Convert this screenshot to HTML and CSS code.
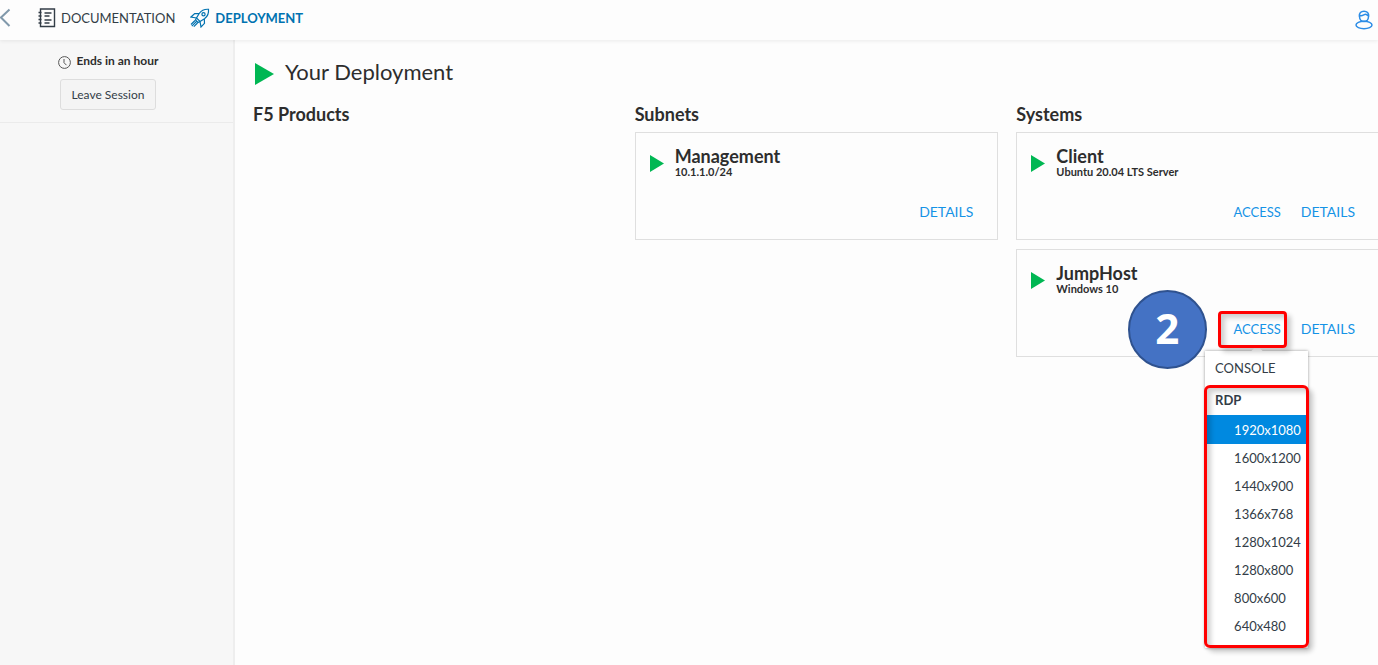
FILE: index.html
```html
<!DOCTYPE html>
<html lang="en">
<head>
<meta charset="utf-8">
<title>Your Deployment</title>
<link rel="stylesheet" href="styles.css">
</head>
<body>
<header class="topbar">
  <button class="back" type="button" aria-label="Back"><svg width="11" height="20" viewBox="0 0 11 20"><path d="M9.500 1.500 1 9.500l8.500 8.500"/></svg></button>
  <nav class="tabs">
    <a class="tab" href="#documentation">
      <svg class="icon-doc" width="18" height="20" viewBox="0 0 18 20"><path d="M2.500 1h14v17.500h-14z"/><path d="M.5 4.500h3M.5 8h3M.5 11.500h3M.5 15h3M6.500 5h7M6.500 8h5M6.500 12h7M6.500 15h5"/></svg>
      <span>DOCUMENTATION</span>
    </a>
    <a class="tab active" href="#deployment">
      <svg class="icon-rocket" width="20" height="20" viewBox="0 0 20 20"><path d="M18.500 1.300c-4-.3-7 1-9.300 4.200L6.500 10l3.500 3.500 4.500-2.700c3.200-2.300 4.400-5.500 4-9.500z"/><circle cx="13.500" cy="6.300" r="1.600"/><path d="M9 5.700 4.700 5.500 1 9l5.500 1M14.300 11l.2 4.300L11 19l-1-5.500M6.500 10l-1 2 2.500 2.500 2-1M5 12.500l-4 4M6.300 13.700 1.800 18.200M7.500 15l-3.700 3.700"/></svg>
      <span>DEPLOYMENT</span>
    </a>
  </nav>
  <button class="user" type="button" aria-label="Account"><svg width="18" height="20" viewBox="0 0 18 20"><path d="M4.300 6.500C4 3 6 1.200 9 1.200s5 1.800 4.700 5.300M5 5.500c2.500.8 4-1.200 5.500-1.200 1.300 0 1.500 1.200 3 1.400M4.500 6.500c0 3 2 5 4.500 5s4.500-2 4.500-5"/><ellipse cx="9" cy="15" rx="8" ry="3.700"/></svg></button>
</header>
<div class="shell">
  <aside class="sidebar">
    <section class="session">
      <p class="timer"><svg width="13" height="13" viewBox="0 0 13 13"><circle cx="6.500" cy="6.500" r="5.900"/><path d="M6 3v3.700l2.500 2.500"/></svg><span>Ends in an hour</span></p>
      <button class="leave" type="button">Leave Session</button>
    </section>
  </aside>
  <main class="main">
    <h1 class="title"><svg class="play" width="19" height="22" viewBox="0 0 19 22"><path d="M0 0 19 11 0 22z"/></svg>Your Deployment</h1>
    <div class="columns">
      <section class="column"><h2 class="heading">F5 Products</h2></section>
      <section class="column">
        <h2 class="heading">Subnets</h2>
        <article class="card">
          <div class="card-head">
            <svg class="play" width="14" height="17" viewBox="0 0 14 17"><path d="M0 0 14 8.500 0 17z"/></svg>
            <div><h3 class="name">Management</h3><p class="detail">10.1.1.0/24</p></div>
          </div>
          <div class="actions"><a class="action more" href="#management">DETAILS</a></div>
        </article>
      </section>
      <section class="column">
        <h2 class="heading">Systems</h2>
        <article class="card">
          <div class="card-head">
            <svg class="play" width="14" height="17" viewBox="0 0 14 17"><path d="M0 0 14 8.500 0 17z"/></svg>
            <div><h3 class="name">Client</h3><p class="detail">Ubuntu 20.04 LTS Server</p></div>
          </div>
          <div class="actions"><button class="action" type="button">ACCESS</button><a class="action more" href="#client">DETAILS</a></div>
        </article>
        <article class="card">
          <div class="card-head">
            <svg class="play" width="14" height="17" viewBox="0 0 14 17"><path d="M0 0 14 8.500 0 17z"/></svg>
            <div><h3 class="name">JumpHost</h3><p class="detail">Windows 10</p></div>
          </div>
          <div class="actions">
            <div class="dropdown">
              <button class="action" type="button" aria-expanded="true">ACCESS</button>
              <div class="menu">
                <button class="item console" type="button">CONSOLE</button>
                <div class="group">
                  <p class="group-title">RDP</p>
                  <button class="item size selected" type="button">1920x1080</button>
                  <button class="item size" type="button">1600x1200</button>
                  <button class="item size" type="button">1440x900</button>
                  <button class="item size" type="button">1366x768</button>
                  <button class="item size" type="button">1280x1024</button>
                  <button class="item size" type="button">1280x800</button>
                  <button class="item size" type="button">800x600</button>
                  <button class="item size" type="button">640x480</button>
                  <span class="outline group-outline"></span>
                </div>
              </div>
              <span class="outline access-outline"></span>
              <span class="step">2</span>
            </div>
            <a class="action more" href="#jumphost">DETAILS</a>
          </div>
        </article>
      </section>
    </div>
  </main>
</div>
</body>
</html>
```
FILE: styles.css
```css
* { box-sizing: border-box; }
body {
  margin: 0;
  min-height: 100vh;
  display: flex;
  flex-direction: column;
  background: #fdfdfd;
  color: #2d2d2d;
  font: 13px/18px Lato, "Open Sans", sans-serif;
}
h1, h2, h3, p { margin: 0; }
button { font: inherit; color: inherit; padding: 0; border: 0; background: none; }
a { color: inherit; text-decoration: none; }
svg { display: block; flex: none; fill: none; stroke: currentColor; }

.topbar {
  display: flex;
  align-items: center;
  height: 40px;
  padding: 0 5px 5px 0;
  background: #fdfdfd;
  box-shadow: 0 1px 4px rgba(0, 0, 0, .08);
  z-index: 1;
}
.back { color: #8199ab; stroke-width: 2; }
.tabs { display: flex; gap: 15px; margin-left: 27px; flex: 1; }
.tab { display: flex; align-items: center; gap: 5px; color: #333d47; }
.tab.active { color: #0072b0; font-weight: 700; }
.icon-doc { stroke-width: 1.400; }
.icon-rocket { stroke-width: 1.200; }
.user { color: #2b8ce6; stroke-width: 1.500; padding-top: 4px; }

.shell { display: flex; flex: 1; }
.sidebar { width: 235px; flex: none; background: #f7f7f7; border-right: 2px solid #eee; }
.session {
  display: flex;
  flex-direction: column;
  align-items: center;
  gap: 9px;
  padding: 12px 17px 12px 0;
  border-bottom: 1px solid #ebebeb;
}
.timer { display: flex; align-items: center; gap: 6px; font-size: 12px; font-weight: 700; }
.timer svg { margin-top: 3px; color: #555; }
.leave {
  height: 31px;
  padding: 0 11px;
  border: 1px solid #ddd;
  border-radius: 3px;
  background: #f4f4f4;
  color: #333d47;
  font-size: 12px;
}

.main { flex: 1; min-width: 0; overflow: hidden; padding: 17px 0 0 18px; }
.play { fill: #00b753; stroke: none; }
.title { display: flex; align-items: center; gap: 11px; padding-left: 2px; font-size: 22px; line-height: 30px; font-weight: 400; }
.title .play { margin-top: 3px; }
.columns {
  display: grid;
  grid-template-columns: repeat(3, 1fr);
  gap: 18px;
  margin: 15px -2px 0 0;
}
.heading { font-size: 18px; line-height: 24px; padding-bottom: 6px; }
.card {
  display: flex;
  flex-direction: column;
  justify-content: space-between;
  height: 108px;
  margin-bottom: 9px;
  padding: 13px 24px 18px 14px;
  border: 1px solid #dfdfdf;
}
.card-head { display: flex; gap: 11px; }
.card-head .play { margin-top: 9px; }
.name { font-size: 18px; line-height: 20px; }
.detail { font-size: 11px; line-height: 12px; font-weight: 700; }
.actions { display: flex; justify-content: flex-end; gap: 20px; }
.action { display: block; color: #1593e6; line-height: 18px; }
.more { font-size: 14px; }

.dropdown { position: relative; }
.menu {
  position: absolute;
  top: 31px;
  left: 50%;
  width: 103px;
  margin-left: -52px;
  background: #fff;
  box-shadow: 0 0 3px rgba(0, 0, 0, .4);
  color: #333d47;
}
.menu::before {
  content: "";
  position: absolute;
  top: -4px;
  left: 48px;
  width: 8px;
  height: 8px;
  background: #fff;
  transform: rotate(45deg);
}
.item { display: block; width: 100%; text-align: left; }
.console { height: 34px; padding-left: 10px; }
.group { position: relative; padding-bottom: 8px; }
.group-title { height: 30px; padding-left: 10px; line-height: 30px; font-weight: 700; }
.size { height: 28px; padding-left: 29px; }
.selected { height: 29px; background: #0089e0; color: #fff; }

.outline {
  position: absolute;
  border: 3px solid #f00;
  border-radius: 4px;
  box-shadow: 4px 4px 5px rgba(0, 0, 0, .2), inset 4px 4px 5px rgba(0, 0, 0, .18);
  pointer-events: none;
}
.group-outline { inset: 0 -1px; border-radius: 6px; }
.access-outline { inset: -9px -6px -10px -15px; }
.step {
  position: absolute;
  top: -30px;
  right: 74px;
  display: grid;
  place-items: center;
  width: 79px;
  height: 79px;
  padding-bottom: 3px;
  border: 2px solid #2f528f;
  border-radius: 50%;
  background: #4472c4;
  color: #fff;
  font: 700 42px/48px "Open Sans", "Noto Sans", sans-serif;
}
```
